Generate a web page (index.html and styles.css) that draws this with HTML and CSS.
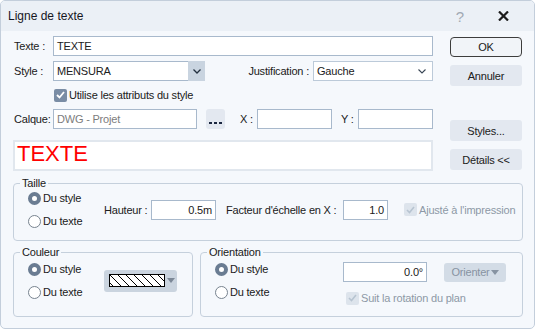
FILE: index.html
```html
<!DOCTYPE html>
<html>
<head>
    <meta content="text/html; charset=utf-8" http-equiv="Content-Type">
    <title>Ligne de texte</title>
    <link rel="stylesheet" href="styles.css">
</head>

<body>
    <div class="window">
        <div class="titlebar">
            <span class="title">Ligne de texte</span>
            <span class="help">?</span>
            <span class="close">
                <svg width="11" height="10" viewBox="0 0 11 10">
                    <path d="M1 0.5 L10 9.5 M10 0.5 L1 9.5" stroke="#1c1c1c" stroke-width="2.2" fill="none"/>
                </svg>
            </span>
        </div>

        <div class="content">
            <div class="top">
                <div class="form">
                    <div class="row row-texte">
                        <span class="lbl">Texte :</span>
                        <div class="field field-texte">TEXTE</div>
                    </div>

                    <div class="row row-style">
                        <span class="lbl">Style :</span>
                        <div class="field select select-style">
                            <span class="value">MENSURA</span>
                            <span class="drop">
                                <svg width="8" height="5" viewBox="0 0 8 5"><path d="M0.5 0.5 L4 4 L7.5 0.5" stroke="#22303f" stroke-width="1.3" fill="none"/></svg>
                            </span>
                        </div>
                        <span class="lbl-just">Justification :</span>
                        <div class="field select select-just">
                            <span class="value">Gauche</span>
                            <svg width="8" height="5" viewBox="0 0 8 5"><path d="M0.5 0.5 L4 4 L7.5 0.5" stroke="#3a4756" stroke-width="1.1" fill="none"/></svg>
                        </div>
                    </div>

                    <div class="check-row">
                        <span class="checkbox">
                            <svg width="9" height="8" viewBox="0 0 9 8"><path d="M1 4 L3.5 6.5 L8 1" stroke="#fff" stroke-width="1.8" fill="none"/></svg>
                        </span>
                        <span>Utilise les attributs du style</span>
                    </div>

                    <div class="row row-calque">
                        <span class="lbl">Calque:</span>
                        <div class="field field-calque">DWG - Projet</div>
                        <div class="dots-btn">
                            <svg width="19" height="20" viewBox="0 0 19 20">
                                <rect x="3" y="13" width="3" height="2" fill="#1b2740"/>
                                <rect x="8" y="13" width="3" height="2" fill="#1b2740"/>
                                <rect x="13" y="13" width="3" height="2" fill="#1b2740"/>
                            </svg>
                        </div>
                        <span class="lbl-xy lbl-x">X :</span>
                        <div class="field field-xy"></div>
                        <span class="lbl-xy lbl-y">Y :</span>
                        <div class="field field-xy"></div>
                    </div>

                    <div class="preview">TEXTE</div>
                </div>

                <div class="buttons">
                    <div class="btn btn-ok">OK</div>
                    <div class="btn btn-cancel">Annuler</div>
                    <div class="btn btn-styles">Styles...</div>
                    <div class="btn btn-details">Détails &lt;&lt;</div>
                </div>
            </div>

            <fieldset class="group group-taille">
                <legend>Taille</legend>
                <div class="taille-body">
                    <div class="radios">
                        <div class="radio-row"><span class="radio on"></span><span>Du style</span></div>
                        <div class="radio-row"><span class="radio"></span><span>Du texte</span></div>
                    </div>
                    <span class="lbl-hauteur">Hauteur :</span>
                    <div class="field num field-hauteur">0.5m</div>
                    <span class="lbl-facteur">Facteur d'échelle en X :</span>
                    <div class="field num field-facteur">1.0</div>
                    <div class="check-off check-ajuste">
                        <span class="checkbox disabled">
                            <svg width="9" height="8" viewBox="0 0 9 8"><path d="M1 4 L3.5 6.5 L8 1" stroke="#b7c4d1" stroke-width="1.6" fill="none"/></svg>
                        </span>
                        <span>Ajusté à l'impression</span>
                    </div>
                </div>
            </fieldset>

            <div class="bottom">
                <fieldset class="group group-couleur">
                    <legend>Couleur</legend>
                    <div class="couleur-body">
                        <div class="radios">
                            <div class="radio-row"><span class="radio on"></span><span>Du style</span></div>
                            <div class="radio-row"><span class="radio"></span><span>Du texte</span></div>
                        </div>
                        <div class="swatch">
                            <svg width="56" height="13" viewBox="0 0 56 13">
                                <defs>
                                    <pattern id="hatch" width="8" height="13" patternUnits="userSpaceOnUse">
                                        <path d="M0 0 L13 13 M-8 0 L5 13" stroke="#000" stroke-width="1"/>
                                    </pattern>
                                </defs>
                                <rect x="0.5" y="0.5" width="55" height="12" fill="#fff"/>
                                <rect x="0.5" y="0.5" width="55" height="12" fill="url(#hatch)" stroke="#000"/>
                            </svg>
                            <svg width="8" height="5" viewBox="0 0 8 5"><path d="M0 0 H8 L4 5 Z" fill="#7c8897"/></svg>
                        </div>
                    </div>
                </fieldset>

                <fieldset class="group group-orient">
                    <legend>Orientation</legend>
                    <div class="orient-body">
                        <div class="radios radios-orient">
                            <div class="radio-row"><span class="radio on"></span><span>Du style</span></div>
                            <div class="radio-row"><span class="radio"></span><span>Du texte</span></div>
                        </div>
                        <div class="orient-right">
                            <div class="orient-top">
                                <div class="field num field-angle">0.0°</div>
                                <div class="btn-orienter">
                                    <span>Orienter</span>
                                    <svg width="8" height="5" viewBox="0 0 8 5"><path d="M0 0 H8 L4 5 Z" fill="#8793a2"/></svg>
                                </div>
                            </div>
                            <div class="check-off check-suit">
                                <span class="checkbox disabled">
                                    <svg width="9" height="8" viewBox="0 0 9 8"><path d="M1 4 L3.5 6.5 L8 1" stroke="#b7c4d1" stroke-width="1.6" fill="none"/></svg>
                                </span>
                                <span>Suit la rotation du plan</span>
                            </div>
                        </div>
                    </div>
                </fieldset>
            </div>
        </div>
    </div>
</body>
</html>
```

FILE: styles.css
```css
* {
    box-sizing: border-box;
}

body {
    margin: 0;
    font-family: "Liberation Sans", Arial, sans-serif;
    font-size: 11px;
    letter-spacing: -0.2px;
    color: #202020;
    background: #ffffff;
}

.window {
    width: 535px;
    height: 329px;
    border: 1px solid #c3cedb;
    border-radius: 5px;
    background: #f5f8fc;
    overflow: hidden;
}

/* Title bar */
.titlebar {
    height: 30px;
    display: flex;
    align-items: center;
    padding-left: 7px;
    background: #ebf0f6;
}

.title {
    flex: 1;
    font-size: 12px;
    letter-spacing: 0;
    color: #16161f;
}

.help {
    font-size: 15px;
    color: #a1a9b3;
    margin-right: 34px;
}

.close {
    display: flex;
    margin-right: 25px;
}

/* Main area */
.content {
    padding: 5px 11px 0 12px;
}

.top {
    display: grid;
    grid-template-columns: 420px 72px;
    column-gap: 17px;
}

.row {
    display: flex;
    align-items: center;
    height: 20px;
}

.row-style {
    margin-top: 5px;
}

.row-calque {
    margin-top: 7px;
}

.lbl {
    width: 40px;
    padding-left: 1px;
}

.field {
    height: 20px;
    display: flex;
    align-items: center;
    padding: 0 3px;
    background: #ffffff;
    border: 1px solid #a8b9cc;
    white-space: nowrap;
}

.field.num {
    justify-content: flex-end;
}

.field-texte {
    width: 380px;
}

.select .value {
    flex: 1;
}

.select-style {
    width: 152px;
    padding-right: 0;
}

.select-style .drop {
    width: 17px;
    height: 20px;
    margin-right: -1px;
    display: flex;
    align-items: center;
    justify-content: center;
    background: #c9d4e0;
}

.lbl-just {
    flex: 1;
    text-align: right;
    padding-right: 4px;
}

.select-just {
    width: 120px;
    padding-right: 6px;
    border-color: #bccad9;
}

.check-row {
    display: flex;
    align-items: center;
    gap: 2px;
    height: 14px;
    margin-top: 7px;
    padding-left: 41px;
}

.checkbox {
    width: 13px;
    height: 13px;
    display: flex;
    align-items: center;
    justify-content: center;
    border-radius: 2px;
    background: #7a8da5;
}

.checkbox.disabled {
    background: #dde4ec;
}

.field-calque {
    width: 144px;
    color: #7c7c7c;
}

.dots-btn {
    width: 19px;
    height: 20px;
    margin-left: 9px;
    border-radius: 3px;
    background: #e3e8f0;
}

.lbl-xy {
    width: 17px;
}

.lbl-x {
    margin-left: 15px;
}

.lbl-y {
    margin-left: 9px;
}

.field-xy {
    width: 75px;
}

.preview {
    height: 31px;
    margin-top: 11px;
    display: flex;
    align-items: center;
    padding: 0 2px 3px;
    border: 2px solid #e1e7ee;
    background: #ffffff;
    color: #ff0000;
    font-size: 22px;
    letter-spacing: 0;
    line-height: 1;
}

/* Right buttons */
.buttons {
    display: flex;
    flex-direction: column;
}

.btn {
    height: 21px;
    display: flex;
    align-items: center;
    justify-content: center;
    border-radius: 3px;
    background: #e3e8f0;
}

.btn-ok {
    height: 20px;
    margin-top: 1px;
    border: 1px solid #3d3d3d;
    border-radius: 4px;
    background: #f1f4f8;
}

.btn-cancel,
.btn-details {
    margin-top: 8px;
}

.btn-styles {
    margin-top: 34px;
}

/* Group boxes */
.group {
    margin: 0;
    padding: 0;
    min-width: 0;
    border: 1px solid #c5d0dc;
    border-radius: 4px;
}

.group legend {
    padding: 0 2px;
    margin-left: 6px;
    line-height: 13px;
}

.group-taille {
    margin-top: 6px;
}

.radios {
    display: flex;
    flex-direction: column;
    gap: 9px;
    width: 76px;
    flex: none;
}

.radio-row {
    display: flex;
    align-items: center;
    gap: 2px;
    height: 14px;
}

.radio {
    width: 13px;
    height: 13px;
    border-radius: 50%;
    border: 1px solid #77838f;
    background: #ffffff;
}

.radio.on {
    border: 4px solid #6a7c92;
}

.taille-body {
    display: flex;
    align-items: center;
    padding: 1px 0 12px 14px;
}

.lbl-hauteur {
    width: 47px;
}

.field-hauteur {
    width: 65px;
}

.lbl-facteur {
    width: 117px;
    margin-left: 10px;
    white-space: nowrap;
}

.field-facteur {
    width: 45px;
}

.check-off {
    display: flex;
    align-items: center;
    gap: 2px;
    color: #8d98a6;
}

.check-ajuste {
    margin-left: 16px;
}

.bottom {
    display: flex;
    gap: 7px;
    margin-top: 5px;
}

.group-couleur {
    width: 180px;
}

.group-orient {
    width: 323px;
}

.couleur-body {
    display: flex;
    align-items: center;
    padding: 3px 0 11px 14px;
}

.swatch {
    width: 73px;
    height: 22px;
    display: flex;
    align-items: center;
    gap: 2px;
    padding-left: 5px;
    border-radius: 3px;
    background: #cad4df;
}

.orient-body {
    display: flex;
    align-items: flex-start;
    padding: 3px 0 11px 14px;
}

.radios-orient {
    width: 128px;
}

.orient-top {
    display: flex;
    align-items: center;
    height: 20px;
}

.field-angle {
    width: 84px;
}

.btn-orienter {
    width: 62px;
    height: 19px;
    margin-left: 17px;
    display: flex;
    align-items: center;
    justify-content: center;
    gap: 1px;
    border-radius: 3px;
    background: #d3dce6;
    color: #8793a2;
}

.check-suit {
    height: 14px;
    margin-top: 9px;
    margin-left: 3px;
}
```
